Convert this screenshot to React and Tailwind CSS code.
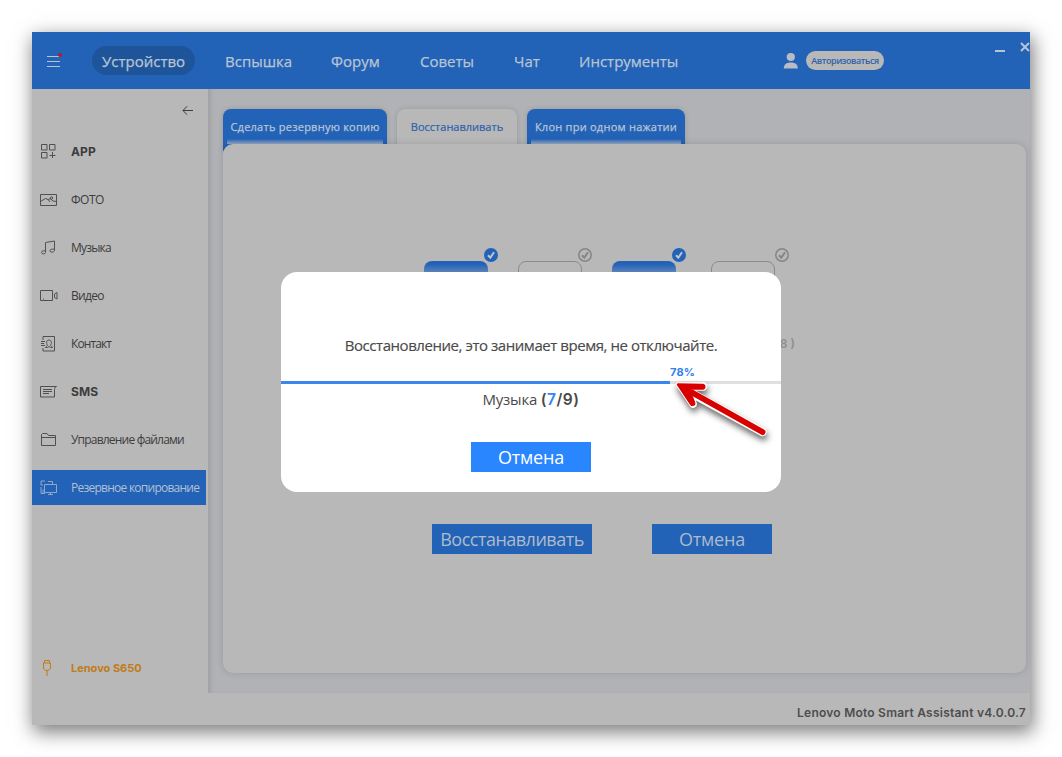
import React from "react";

const Icon = ({ children, className = "", size = 18 }) => (
  <svg width={size} height={size} viewBox="0 0 18 18" fill="none" stroke="currentColor" strokeWidth="1" className={"shrink-0 " + className}>
    {children}
  </svg>
);

const icons = {
  app: (
    <>
      <path d="M1.5 1.5h5.5v5.5h-5.5zM9.5 1.5h5.5v5.5h-5.5zM1.5 9.5h5.5v5.5h-5.5zM12.5 9v6M9.5 12.5h6" />
    </>
  ),
  photo: (
    <>
      <path d="M.5 3.500h16v11h-16zM.5 10.500l5-3 2.500 1 2 2.500M8 9l2-1.500 3 2.500 3.500.5" />
      <circle cx="11.500" cy="7" r="1.200" />
    </>
  ),
  music: (
    <>
      <path d="M5.500 13.500V3.500l9-1.500v9.500M5.500 13.500c0 1.800-4 2-4 0 0-1.700 2.500-2 4-1.500M14.500 11.500c0 2-4.500 2.300-4.500.3 0-1.800 3-2 4.500-1.300" />
    </>
  ),
  video: (
    <>
      <path d="M.5 3.500h12v10H.5zM14.500 7l2.500-1.500v6.500L14.500 10.500zM3.500 11.500v1" />
    </>
  ),
  contact: (
    <>
      <path d="M3 5V1.500h11.500v14.500H3V13M1 6.500h4M1 8.500h3M1 10.500h4" />
      <path d="M5.500 12.500c0-1 2-1.300 2-2.300-1.400-2-1.300-5.200 1.500-5.200s2.900 3.200 1.500 5.200c0 1 2 1.300 2 2.300h-2l-1.500-1-1.500 1z" />
    </>
  ),
  sms: (
    <>
      <path d="M.5 3.500h16c-1.500.8-2 1.800-2 3v7.500H.5zM3 6.500h9M3 8.500h9M3 10.500h6" />
    </>
  ),
  folder: (
    <>
      <path d="M1.500 14.500V3.500l1-1h4.500l1.500 2h7v10zM1.500 6.500h14" />
    </>
  ),
  backup: (
    <>
      <path d="M4.500 5.500h12v8h-12zM8 15.500h5M10.500 13.500v2M5 2H1v4h2M1 8v6.500h4M3 10.500v4M8 2.500h4.500V5" />
    </>
  ),
};

const latin = "font-['Inter'] text-[12px] font-bold tracking-[0.15px]";
const cyrillic = "text-[12px] tracking-[-0.8px]";

const menu = [
  ["app", "APP", latin],
  ["photo", "ФОТО", "text-[12px] tracking-[-0.5px]"],
  ["music", "Музыка", cyrillic],
  ["video", "Видео", "text-[12px] tracking-[-0.7px]"],
  ["contact", "Контакт", "text-[12px] tracking-[-0.9px]"],
  ["sms", "SMS", latin],
  ["folder", "Управление файлами", cyrillic],
  ["backup", "Резервное копирование", "text-[12px] tracking-[-0.75px]"],
];

const nav = [
  ["Вспышка", "w-[106px]"],
  ["Форум", "w-[89px]"],
  ["Советы", "w-[94px]"],
  ["Чат", "w-[65px]"],
  ["Инструменты", "w-[204px]"],
];

function Tile({ on, badge = "left-[59px]", className = "" }) {
  return (
    <div className={"relative h-16 w-16 rounded-lg " + (on ? "bg-linear-to-b from-[#2262b7] from-5% to-[#b8b8b8] to-40% " : "border border-[#8b8b8b] ") + className}>
      <svg width="14" height="14" viewBox="0 0 14 14" fill="none" className={"absolute " + (on ? "left-[60px] -top-[13px]" : "-top-[14px] " + badge)}>
        <circle cx="7" cy="7" r={on ? 7 : 6.2} fill={on ? "#2262b7" : "none"} stroke={on ? "none" : "#858585"} strokeWidth="1.500" />
        <path d="M4 7.200l2.300 2.500L10 4.300" stroke={on ? "#c2c6cc" : "#858585"} strokeWidth="2" />
      </svg>
    </div>
  );
}

function Header() {
  return (
    <header className="flex h-[57px] shrink-0 bg-[#2262b7] text-[15px] text-[#b9c4d3]">
      <div className="flex w-[60px] items-center pb-px pl-[14px]">
        <svg width="18" height="16" viewBox="0 0 18 16" fill="none">
          <path d="M1 4.500h13M1 9.500h13M1 14.500h13" stroke="#b9c4d3" />
          <circle cx="14" cy="3" r="2" fill="#b01c2c" />
        </svg>
      </div>
      <div className="mt-[14px] flex h-[29px] w-[103px] items-center rounded-full bg-[#1e5499] pt-px pl-[10px] whitespace-nowrap [-webkit-text-stroke:0.25px_currentColor]">Устройство</div>
      <nav className="ml-[30px] flex h-[59px] items-center [-webkit-text-stroke:0.25px_currentColor]">
        {nav.map(([t, w]) => (
          <span key={t} className={"whitespace-nowrap " + w}>{t}</span>
        ))}
      </nav>
      <svg width="16" height="18" viewBox="0 0 16 18" fill="#b8bcc4" className="mt-5 shrink-0">
        <circle cx="7.800" cy="5" r="4.100" />
        <path d="M.8 16.500c0-4 2.500-6 7-6s7 2 7 6z" />
      </svg>
      <div className="mt-[19px] ml-[7px] flex h-[19px] w-[78px] shrink-0 items-center justify-center rounded-full bg-[#b8b8b8] text-[9px] font-semibold tracking-[-0.45px] text-[#2e62ad]">Авторизоваться</div>
      <svg width="36" height="20" viewBox="0 0 36 20" className="mt-1 ml-auto shrink-0" fill="none" stroke="#b9c4d3" strokeWidth="2">
        <path d="M1 15h10M27 7l8 8M35 7l-8 8" />
      </svg>
    </header>
  );
}

function Sidebar() {
  return (
    <aside className="flex w-[176px] shrink-0 flex-col bg-[#b8b8b8] text-[#3d3d3d]">
      <svg width="12" height="10" viewBox="0 0 12 10" fill="none" stroke="currentColor" className="mt-4 ml-[150px]">
        <path d="M11 5.500H1M5 1.300L1 5.500l4 4.200" />
      </svg>
      <ul className="mt-[19px] flex flex-col gap-[13px]">
        {menu.map(([icon, label, cls]) => (
          <li key={label} className={"flex h-[35px] w-[174px] items-center pl-2 " + (icon === "backup" ? "bg-[#2262b7] text-[#b3c0d2]" : "")}>
            <Icon className={icon === "backup" ? "text-[#92a8c6]" : "text-[#505050]"}>{icons[icon]}</Icon>
            <span className={"ml-[13px] whitespace-nowrap " + cls}>{label}</span>
          </li>
        ))}
      </ul>
      <div className="mt-auto mb-[15px] flex h-5 items-center pl-[10px] text-[#c07c18]">
        <svg width="10" height="18" viewBox="0 0 10 18" fill="none" stroke="currentColor">
          <path d="M2.500 4V1.500h5V4M1.500 4h7v5c0 1.500-2 2.500-3.500 2.500S1.500 10.500 1.500 9zM5 12v5" />
        </svg>
        <span className="mt-px ml-[19px] font-['Inter'] text-[11px] font-bold whitespace-nowrap">Lenovo S650</span>
      </div>
    </aside>
  );
}

function BlueTab({ width, children }) {
  return (
    <div className={"flex h-[42px] shrink-0 flex-col items-center rounded-t-lg bg-[#2262b7] pt-[10px] text-[11px] whitespace-nowrap text-[#b9c4d3] shadow-[0_0_5px_rgba(0,0,0,0.15)] " + width}>
      <span className="h-[20px] tracking-[0.25px] [-webkit-text-stroke:0.25px_currentColor]">{children}</span>
      <div className="mx-1 h-[5px] self-stretch bg-linear-to-b from-[#2262b7] to-[#96a9c4]" />
    </div>
  );
}

function Content() {
  return (
    <main className="flex flex-1 flex-col bg-[#b0b2b5] pt-5 pr-1 pl-[15px] shadow-[inset_5px_0_5px_-3px_rgba(0,0,0,0.12)]">
      <div className="flex h-[35px] gap-[10px]">
        <BlueTab width="w-[164px]">Сделать резервную копию</BlueTab>
        <div className="flex h-[42px] w-[120px] shrink-0 justify-center rounded-t-lg bg-[#b8b8b8] pt-[10px] text-[11px] whitespace-nowrap text-[#2e62ad] shadow-[0_0_5px_rgba(0,0,0,0.15)] [-webkit-text-stroke:0.2px_currentColor]">Восстанавливать</div>
        <BlueTab width="w-[158px]">Клон при одном нажатии</BlueTab>
      </div>
      <section className="relative h-[529px] rounded-[10px] bg-[#b8b8b8] shadow-[0_0_7px_rgba(0,0,0,0.14)]">
        <div className="flex pt-[117px] pl-[201px]">
          <Tile on />
          <Tile className="ml-[30px]" />
          <Tile on className="ml-[30px]" />
          <Tile className="ml-[35px]" badge="left-[63px]" />
        </div>
        <div className="mt-[10px] h-[18px] pr-[231px] text-right font-['Inter'] text-[12px] leading-[18px] font-semibold text-[#8e8e8e]">( 8 )</div>
        <div className="mt-[171px] flex gap-[60px] pl-[209px] text-[18px] text-[#aebbcb]">
          <button className="h-[30px] w-40 bg-[#2262b7] leading-[30px] tracking-[-0.5px]">Восстанавливать</button>
          <button className="h-[30px] w-[120px] bg-[#2262b7] leading-[30px] tracking-[-0.2px]">Отмена</button>
        </div>
      </section>
    </main>
  );
}

function Dialog() {
  return (
    <div className="absolute top-[272px] left-[281px] flex h-[220px] w-[500px] flex-col items-center rounded-2xl bg-white text-[#4a4a4a]">
      <p className="mt-[62px] h-[22px] text-[15px] leading-[22px] tracking-[-0.45px] whitespace-nowrap [-webkit-text-stroke:0.15px_currentColor]">Восстановление, это занимает время, не отключайте.</p>
      <div className="mt-[7px] h-[17.500px] w-full pl-[389px] font-['Inter'] text-[11px] leading-[18px] font-bold tracking-[0.2px] text-[#2f80ee]">78%</div>
      <div className="h-[3.500px] w-full bg-[#e0e0e0]">
        <div className="h-full w-[389px] bg-[#3a86ee]" />
      </div>
      <p className="mt-1 h-[22px] text-[15px] leading-[22px] tracking-[-0.2px] whitespace-nowrap">
        Музыка <span className="font-['Inter'] text-[15.500px] font-semibold tracking-[0.5px]">(<span className="text-[#2f86fa]">7</span>/9)</span>
      </p>
      <button className="mt-8 h-[30px] w-[120px] bg-[#2a86ff] text-[18px] leading-[30px] tracking-[-0.2px] text-white">Отмена</button>
      <svg width="120" height="80" viewBox="0 0 120 80" className="absolute top-[100px] left-[385px] drop-shadow-[1px_4px_3px_rgba(0,0,0,0.6)]" fill="none" strokeLinecap="round" strokeLinejoin="round">
        <path d="M96.500 60L27 22" stroke="#fff" strokeWidth="8.500" />
        <path d="M12 12.500L37 12.500a2 2 0 0 1 0 4H24.500l4 15a1.500 1.500 0 0 1-3 1z" fill="#fff" stroke="#fff" strokeWidth="4.500" />
        <path d="M12 12.500L37 13a1.800 1.800 0 0 1 0 3.500H22.500l5.500 14a1.500 1.500 0 0 1-3 1.500z" fill="#d90000" stroke="#d90000" strokeWidth="2.400" />
        <path d="M96.500 60L26 20.500" stroke="#d90000" strokeWidth="6" />
      </svg>
    </div>
  );
}

export default function App() {
  return (
    <div className="relative h-[757px] w-[1062px] overflow-hidden bg-white pt-8 pl-8 font-['Open_Sans',sans-serif]">
      <div className="flex h-[693px] w-[998px] flex-col bg-[#b8b8b8] shadow-[2px_6px_18px_1px_rgba(0,0,0,0.52)]">
        <Header />
        <div className="flex h-[604px]">
          <Sidebar />
          <Content />
        </div>
        <footer className="flex h-8 items-center justify-end pt-[7px] pr-1 font-['Inter'] text-[12px] font-semibold tracking-[0.23px] text-[#4d4d4d]">Lenovo Moto Smart Assistant v4.0.0.7</footer>
      </div>
      <Dialog />
    </div>
  );
}
